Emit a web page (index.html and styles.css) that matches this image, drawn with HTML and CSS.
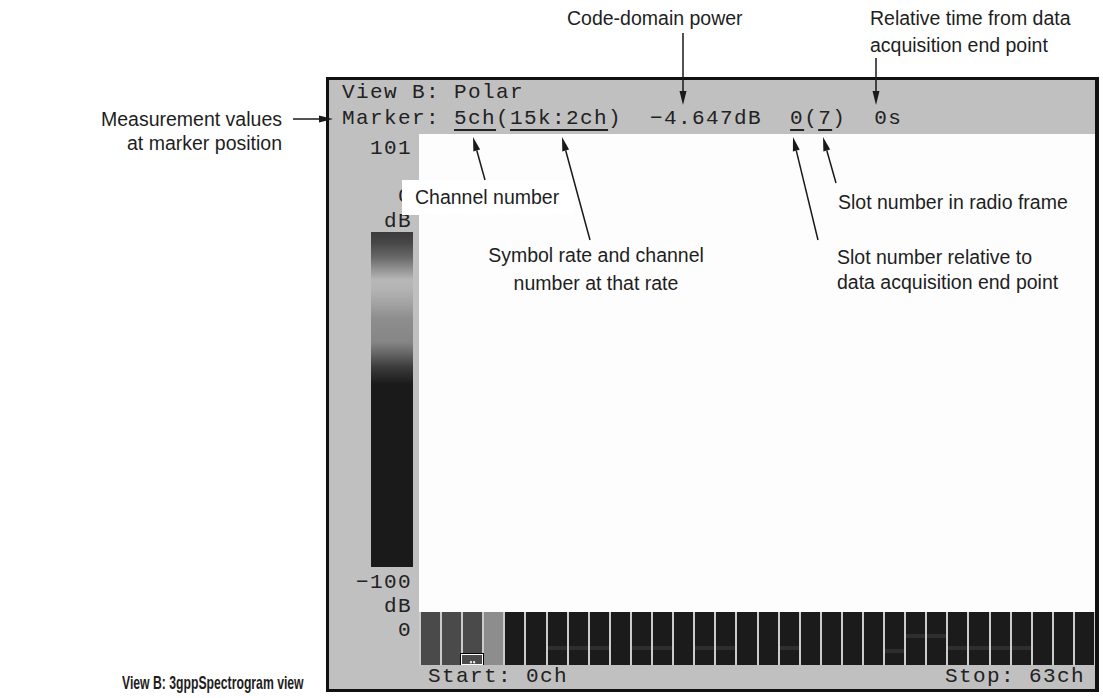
FILE: index.html
```html
<!DOCTYPE html>
<html lang="en">
<head>
    <meta charset="UTF-8">
    <meta name="viewport" content="width=device-width, initial-scale=1.0">
    <title>View B: 3gppSpectrogram view</title>
    <link rel="stylesheet" href="styles.css">
</head>
<body>

<div class="figure">

    <div class="screen">
        <div class="screen-head">
            <div class="line">View B: Polar</div>
            <div class="line">Marker: <u>5ch</u>(<u>15k:2ch</u>)  −4.647dB  <u>0</u>(<u>7</u>)  0s</div>
        </div>

        <div class="scale">
            <span class="scale-top">101</span>
            <span class="scale-zero">0</span>
            <span class="scale-unit">dB</span>
            <div class="colorbar"></div>
            <span class="scale-min">−100</span>
            <span>dB</span>
            <span>0</span>
        </div>

        <div class="plot"></div>

        <div class="bars">
            <div class="bar mid"></div>
            <div class="bar mid"></div>
            <div class="bar mid"><div class="marker"></div></div>
            <div class="bar light"></div>
            <div class="bar"></div>
            <div class="bar"></div>
            <div class="bar s1"></div>
            <div class="bar s1"></div>
            <div class="bar s1"></div>
            <div class="bar"></div>
            <div class="bar s1"></div>
            <div class="bar s1"></div>
            <div class="bar"></div>
            <div class="bar s1"></div>
            <div class="bar s1"></div>
            <div class="bar"></div>
            <div class="bar"></div>
            <div class="bar s1"></div>
            <div class="bar"></div>
            <div class="bar"></div>
            <div class="bar"></div>
            <div class="bar"></div>
            <div class="bar s3"></div>
            <div class="bar s2"></div>
            <div class="bar s2"></div>
            <div class="bar s1"></div>
            <div class="bar s1"></div>
            <div class="bar s1"></div>
            <div class="bar s1"></div>
            <div class="bar"></div>
            <div class="bar"></div>
            <div class="bar"></div>
        </div>

        <div class="screen-foot">
            <span>Start: 0ch</span>
            <span>Stop: 63ch</span>
        </div>
    </div>

    <!-- callouts -->
    <div class="note note-power">Code-domain power</div>
    <div class="note note-time">Relative time from data<br>acquisition end point</div>
    <div class="note note-measure">Measurement values<br>at marker position</div>
    <div class="note note-channel">Channel number</div>
    <div class="note note-symbol">Symbol rate and channel<br>number at that rate</div>
    <div class="note note-slot-frame">Slot number in radio frame</div>
    <div class="note note-slot-rel">Slot number relative to<br>data acquisition end point</div>
    <div class="note caption">View B: 3gppSpectrogram view</div>

    <svg class="arrows" width="1103" height="698" viewBox="0 0 1103 698">
        <g stroke="#1a1a1a" stroke-width="1.5" fill="none">
            <line x1="293" y1="119" x2="321" y2="119"/>
            <line x1="683" y1="33" x2="683" y2="92"/>
            <line x1="876" y1="58" x2="876" y2="92"/>
            <line x1="485" y1="180" x2="476.8" y2="150.5"/>
            <line x1="590" y1="240" x2="565.7" y2="150.5"/>
            <line x1="818" y1="240" x2="796.3" y2="150.6"/>
            <line x1="836" y1="183" x2="826.8" y2="150.5"/>
        </g>
        <g fill="#1a1a1a">
            <polygon points="333,119 319,115.5 319,122.5"/>
            <polygon points="683,105 679.5,91 686.5,91"/>
            <polygon points="876,105 872.5,91 879.5,91"/>
            <polygon points="473,137 480.1,149.6 473.4,151.4"/>
            <polygon points="562,137 569.1,149.6 562.3,151.4"/>
            <polygon points="793,137 799.7,149.8 792.9,151.4"/>
            <polygon points="823,137 830.2,149.5 823.4,151.4"/>
        </g>
    </svg>

</div>

</body>
</html>
```

FILE: styles.css
```css
body {
    margin: 0;
    padding: 0;
    background-color: #fff;
    font-family: "Liberation Sans", Arial, sans-serif;
    color: #1a1a1a;
}
.figure {
    position: relative;
    width: 1103px;
    height: 698px;
    overflow: hidden;
}

/* instrument screen */
.screen {
    box-sizing: border-box;
    margin: 77px 0 0 326px;
    width: 773px;
    height: 615px;
    border: 3px solid #111;
    border-right-width: 4px;
    background-color: #c0c0c0;
    display: grid;
    grid-template-columns: 90px 1fr;
    grid-template-rows: 54px 478px 53px 1fr;
    font-family: "Liberation Mono", "DejaVu Sans Mono", monospace;
    font-size: 21px;
    letter-spacing: 1.4px;
    color: #222;
}
.screen-head {
    grid-column: 1 / -1;
    grid-row: 1;
    padding-left: 13px;
    line-height: 26px;
}
.screen-head .line {
    white-space: pre;
}
.screen-head u {
    text-decoration-thickness: 2px;
    text-underline-offset: 5px;
}
.scale {
    grid-column: 1;
    grid-row: 2 / 4;
    display: flex;
    flex-direction: column;
    align-items: flex-end;
    padding-right: 7px;
    line-height: 24px;
}
.scale-top {
    margin-top: 3px;
}
.scale-zero {
    margin-top: 24px;
}
.scale-unit {
    margin-top: 2px;
    line-height: 22px;
}
.colorbar {
    width: 42px;
    height: 335px;
    margin-top: -1px;
    margin-right: -1px;
    background: linear-gradient(to bottom,
        #3a3a3a 0px, #474747 11px, #6a6a6a 26px, #9c9c9c 40px,
        #b8b8b8 48px, #b3b3b3 58px, #a2a2a2 72px, #8e8e8e 86px,
        #868686 110px, #646464 122px, #3c3c3c 135px, #222 148px,
        #1a1a1a 152px, #1a1a1a 335px);
}
.scale-min {
    margin-top: 4px;
}
.plot {
    grid-column: 2;
    grid-row: 2;
    background-color: #fdfdfd;
}
.bars {
    grid-column: 2;
    grid-row: 3;
    display: grid;
    grid-template-columns: repeat(32, 1fr);
    gap: 2px;
    padding: 0 1px 0 2px;
    background-color: #cbcbcb;
}
.bar {
    position: relative;
    background-color: #1b1b1b;
}
.bar.mid {
    background-color: #4a4a4a;
}
.bar.light {
    background-color: #8d8d8d;
}
.bar.s1 {
    background: linear-gradient(to bottom, #1b1b1b 34px, #2e2e2e 34px, #2e2e2e 38px, #1b1b1b 38px);
}
.bar.s2 {
    background: linear-gradient(to bottom, #1b1b1b 22px, #2e2e2e 22px, #2e2e2e 26px, #1b1b1b 26px);
}
.bar.s3 {
    background: linear-gradient(to bottom, #1b1b1b 37px, #2e2e2e 37px, #2e2e2e 41px, #1b1b1b 41px);
}
.marker {
    position: absolute;
    left: -3px;
    right: -2px;
    bottom: 0;
    height: 11px;
    border: 1px solid #000;
    border-bottom: none;
    box-shadow: inset 0 0 0 1px #fff;
    background: radial-gradient(circle at 45% 75%, #ddd 0 1px, transparent 1.5px),
                radial-gradient(circle at 60% 75%, #ddd 0 1px, transparent 1.5px),
                #4a4a4a;
}
.screen-foot {
    grid-column: 1 / -1;
    display: flex;
    justify-content: space-between;
    padding: 0 10px 0 99px;
    line-height: 24px;
}

/* callouts around the screen */
.note {
    position: absolute;
    font-size: 19.5px;
    line-height: 24px;
    white-space: nowrap;
    color: #1e1e1e;
}
.note-power {
    left: 567px;
    top: 6px;
}
.note-time {
    left: 870px;
    top: 5px;
    line-height: 27px;
}
.note-measure {
    right: 821px;
    top: 107px;
    text-align: right;
}
.note-channel {
    left: 402px;
    top: 180px;
    width: 173px;
    padding-left: 13px;
    box-sizing: border-box;
    line-height: 35px;
    background-color: #fff;
}
.note-symbol {
    left: 476px;
    top: 241px;
    width: 240px;
    text-align: center;
    line-height: 28px;
}
.note-slot-frame {
    left: 838px;
    top: 190px;
}
.note-slot-rel {
    left: 837px;
    top: 245px;
    line-height: 25px;
}
.caption {
    left: 122px;
    top: 671px;
    font-size: 18.5px;
    font-weight: bold;
    transform: scaleX(0.66);
    transform-origin: left center;
}
.arrows {
    position: absolute;
    left: 0;
    top: 0;
    pointer-events: none;
}
```
